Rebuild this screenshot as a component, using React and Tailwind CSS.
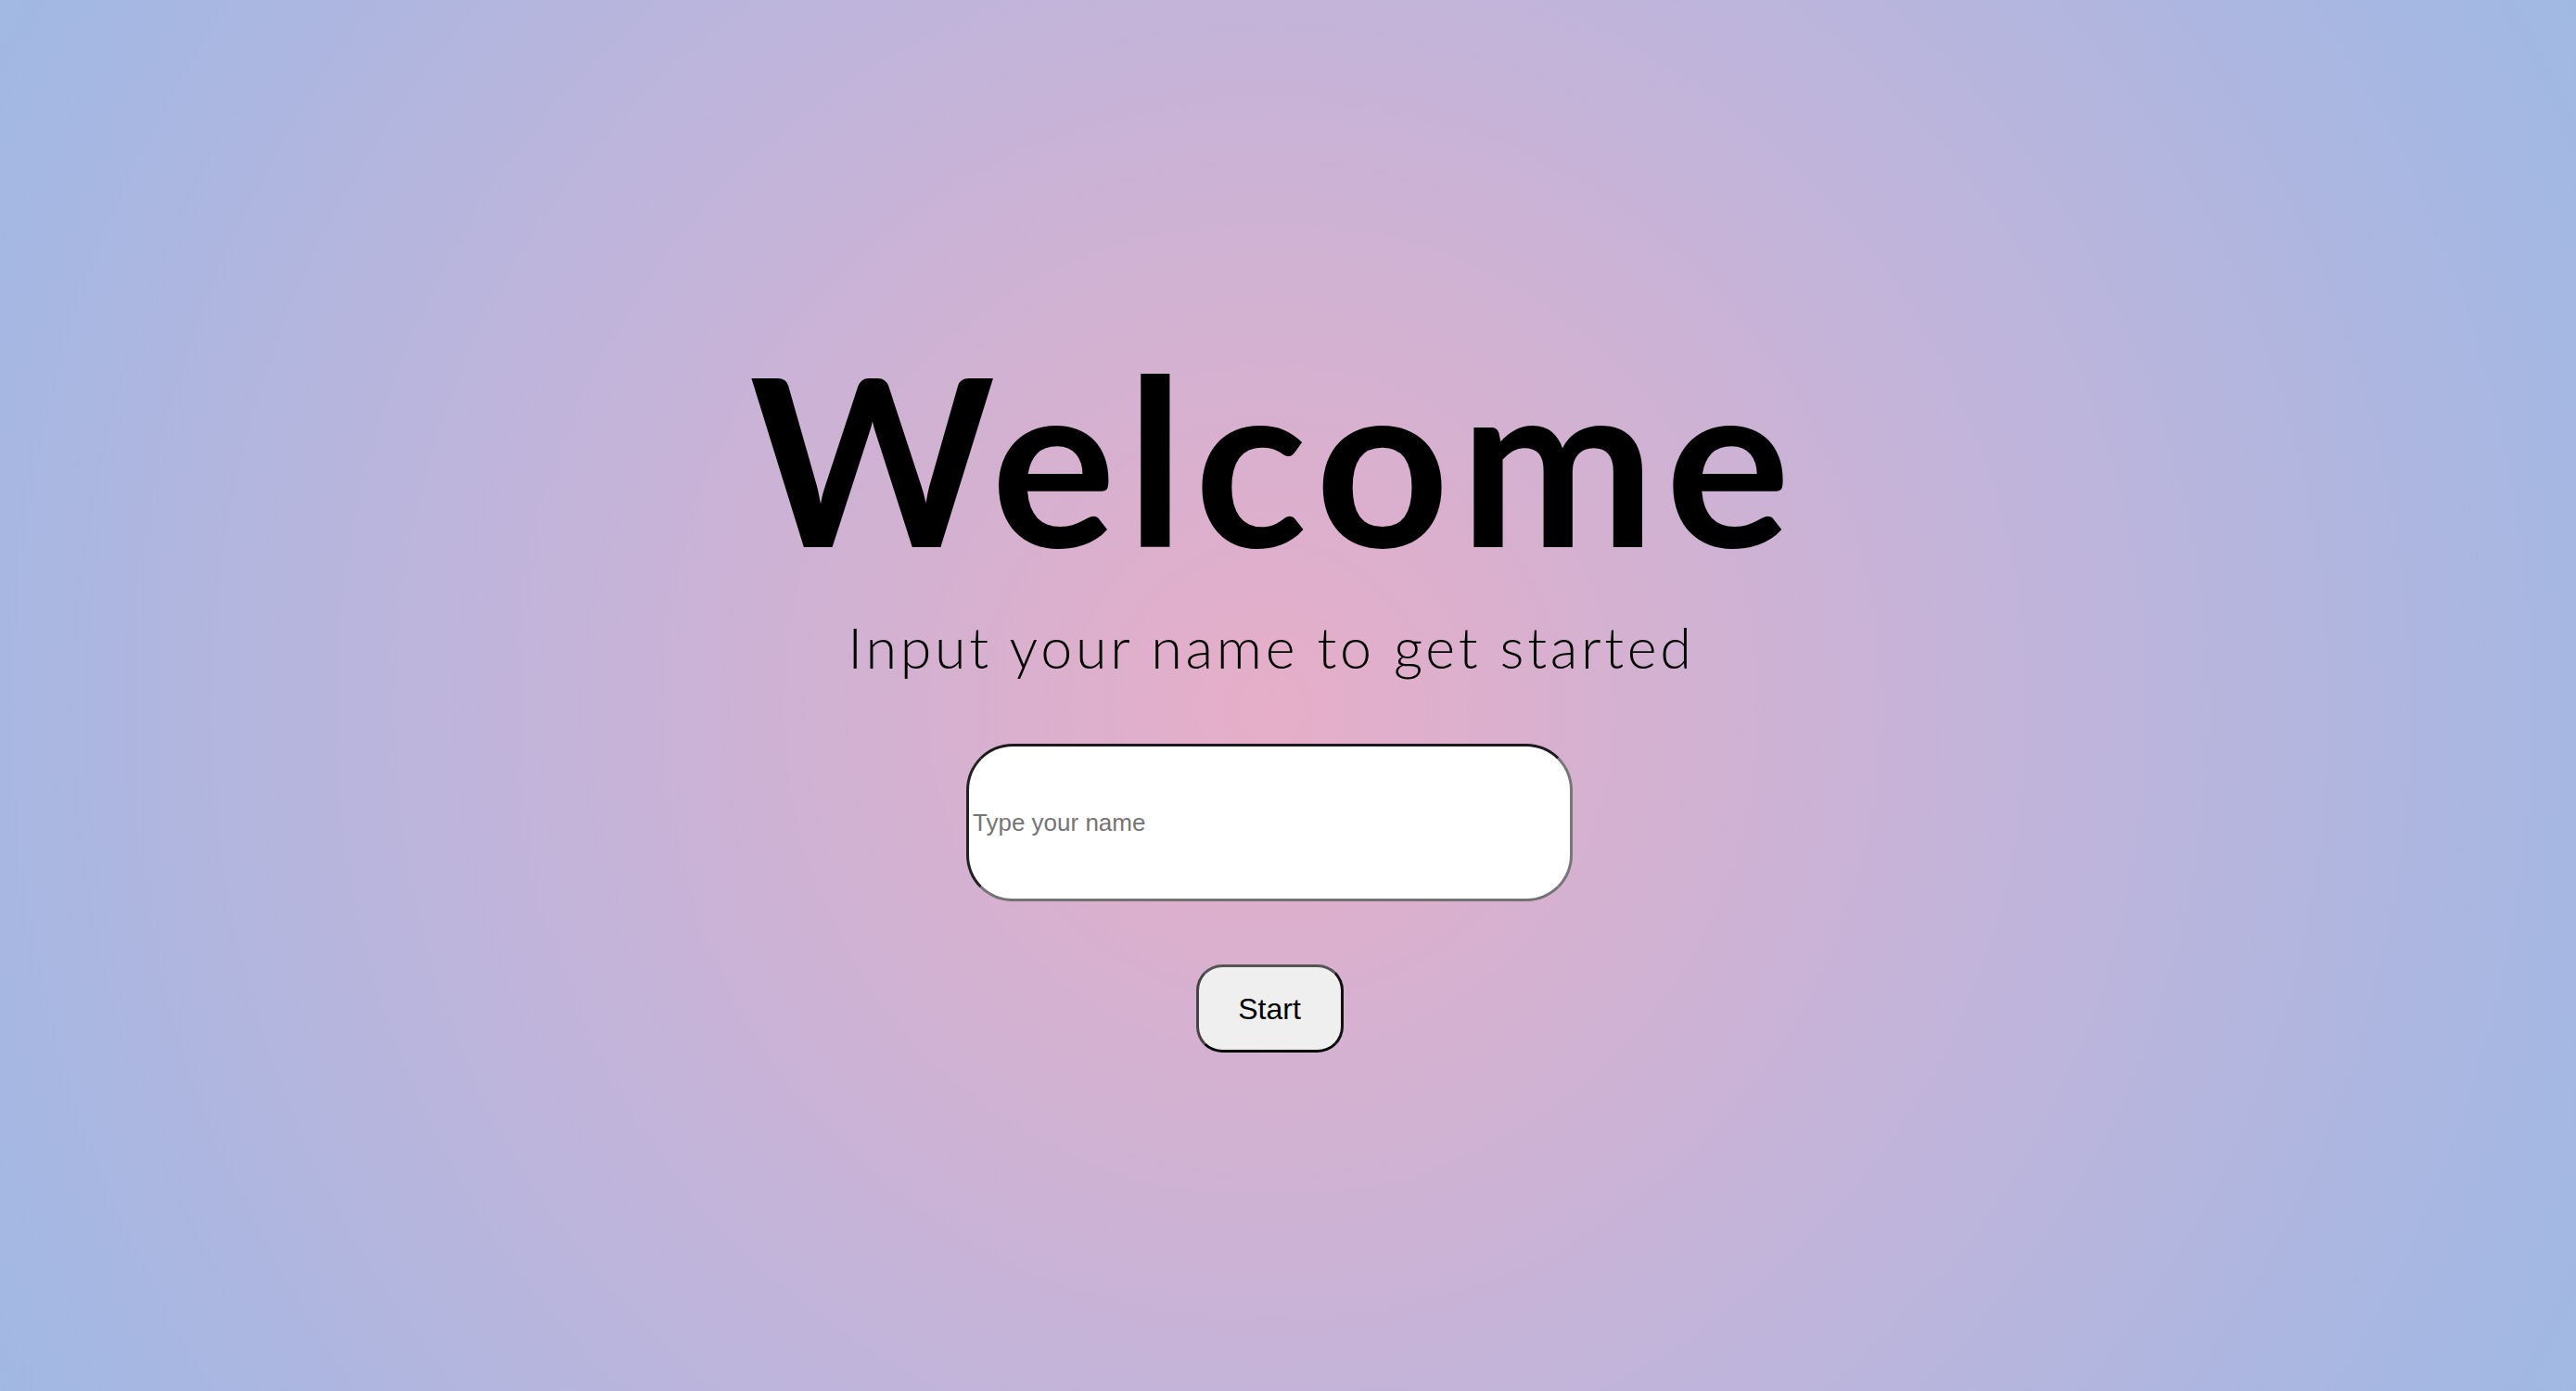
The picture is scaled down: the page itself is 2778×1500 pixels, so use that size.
export default function App() {
  return (
    <div className="min-h-[1500px] w-full bg-[radial-gradient(circle_at_49.3%_51%,#e6aec8_0%,#c2b4da_50%,#a6b7e2_88%,#a0b9e3_100%)] pr-[40px] pt-[367px]">
      <div className="flex flex-col items-center">
        <h1 className="pl-[12px] text-[252px] leading-none font-bold text-black tracking-[11px] font-['Lato','Noto_Sans',sans-serif]">
          Welcome
        </h1>
        <p className="mt-[48px] pl-[4px] text-[61px] leading-none font-light text-black tracking-[3.7px] font-['Lato','Noto_Sans',sans-serif]">
          Input your name to get started
        </p>
        <input
          type="text"
          placeholder="Type your name"
          className="mt-[74px] h-[170px] w-[654px] rounded-[50px] border-[3px] border-solid border-t-[#1a1a1a] border-l-[#222222] border-b-[#737373] border-r-[#777777] bg-white pl-[4px] text-[26px] text-black placeholder:text-[#757575] outline-none font-['Liberation_Sans',Arial,sans-serif]"
        />
        <button
          type="button"
          className="mt-[68px] h-[95px] w-[159px] rounded-[28px] border-[3px] border-solid border-t-[#555555] border-l-[#444444] border-b-[#000000] border-r-[#111111] bg-[#efefef] text-[32px] text-black font-['Liberation_Sans',Arial,sans-serif]"
        >
          Start
        </button>
      </div>
    </div>
  );
}
